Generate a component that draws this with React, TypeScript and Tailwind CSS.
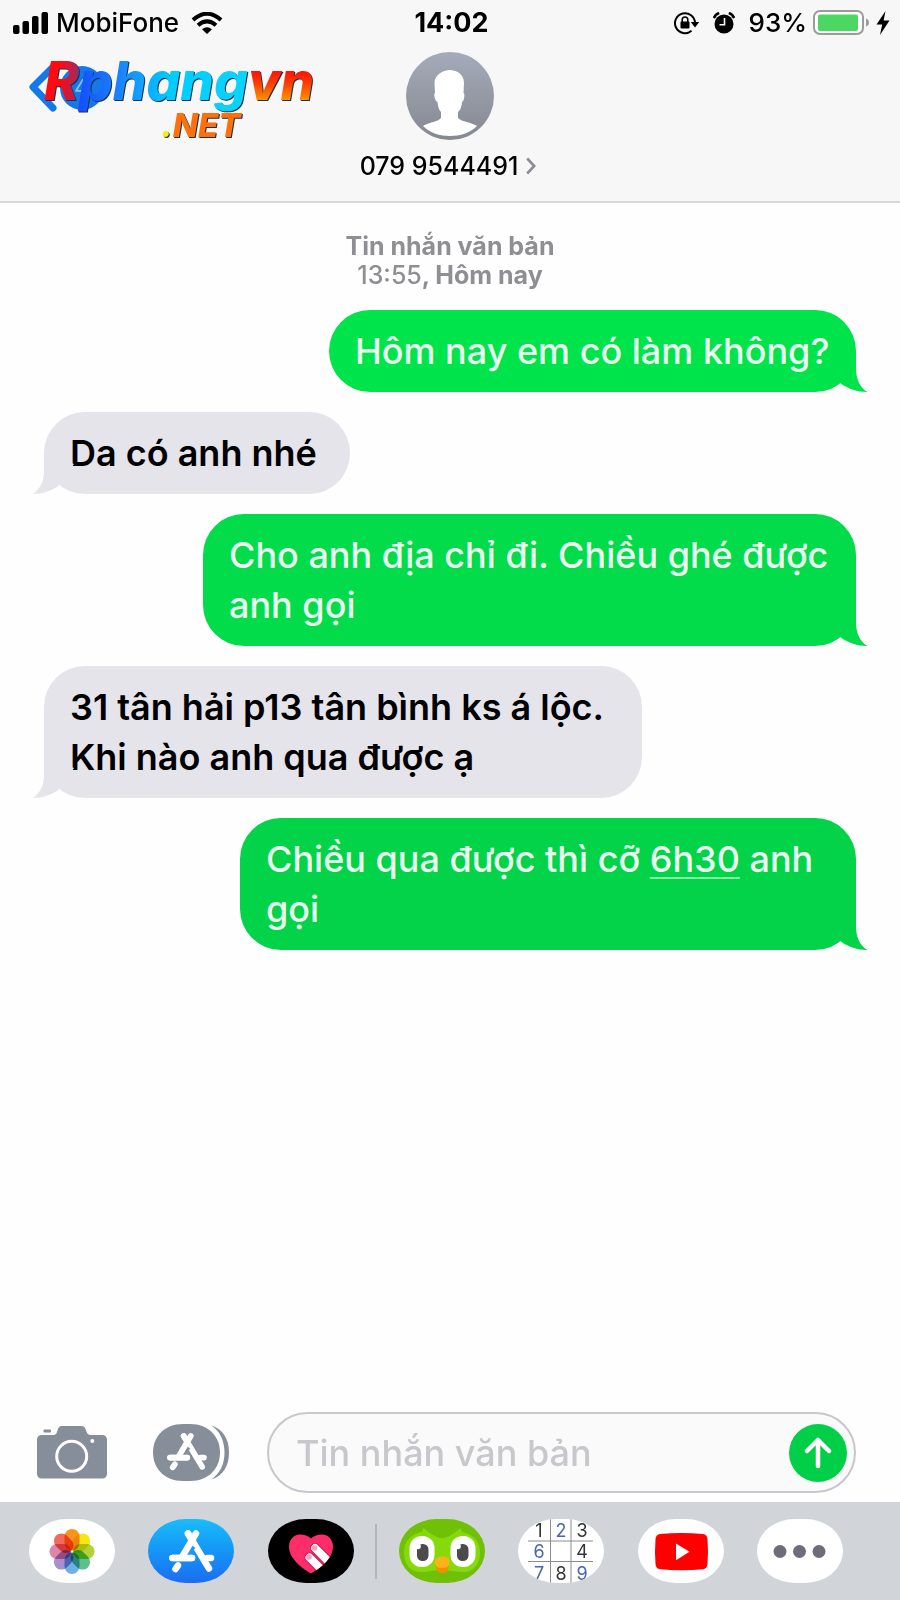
import React, { useState } from "react";

type Message = {
  mine: boolean;
  box: string;
  tail: string;
  body: React.ReactNode;
};

const messages: Message[] = [
  {
    mine: true,
    box: "w-[527px] bg-[#00e44b]",
    tail: "text-[#00e44b]",
    body: "Hôm nay em có làm không?",
  },
  {
    mine: false,
    box: "w-[306px] bg-[#e5e4ea]",
    tail: "text-[#e5e4ea]",
    body: "Da có anh nhé",
  },
  {
    mine: true,
    box: "w-[653px] bg-[#02dc4a]",
    tail: "text-[#02dc4a]",
    body: "Cho anh địa chỉ đi. Chiều ghé được anh gọi",
  },
  {
    mine: false,
    box: "w-[598px] bg-[#e5e4ea]",
    tail: "text-[#e5e4ea]",
    body: "31 tân hải p13 tân bình ks á lộc. Khi nào anh qua được ạ",
  },
  {
    mine: true,
    box: "w-[616px] bg-[#02d348]",
    tail: "text-[#02d348]",
    body: (
      <>
        Chiều qua được thì cỡ{" "}
        <a href="#time" className="underline decoration-2 underline-offset-[5px] decoration-[#8eeaa9]">
          6h30
        </a>{" "}
        anh
        <br />
        gọi
      </>
    ),
  },
];

const StatusBar = () => (
  <div className="flex h-[46px] items-center justify-between pl-[13px] pr-[10px]">
    <div className="flex flex-1 items-center">
      <svg width="36" height="22" viewBox="0 0 36 22" className="mr-[7px]">
        <rect x="0" y="13" width="6.500" height="9" rx="2" />
        <rect x="9.500" y="9" width="6.500" height="13" rx="2" />
        <rect x="19" y="4" width="6.500" height="18" rx="2" />
        <rect x="28.500" y="0" width="6.500" height="22" rx="2" />
      </svg>
      <span className="text-[26px] font-medium leading-8">MobiFone</span>
      <svg width="32" height="22" viewBox="0 0 32 22" className="ml-[12px]" fill="none" stroke="black" strokeWidth="4">
        <path d="M2 8 Q16 -4.5 30 8" />
        <path d="M7 13.2 Q16 5.5 25 13.2" />
        <path d="M11 17.2 Q16 13.2 21 17.2 L16 22 Z" fill="black" stroke="none" />
      </svg>
    </div>
    <span className="text-[27px] font-bold leading-8">14:02</span>
    <div className="flex flex-1 items-center justify-end">
      {/* rotation lock */}
      <svg width="26" height="24" viewBox="0 0 26 24" fill="none" stroke="black" strokeWidth="2">
        <path d="M17.5 19.8 A10 10 0 1 1 21 12" />
        <path d="M16.8 11 L25.2 11 L21 16.5 Z" fill="black" stroke="none" />
        <rect x="6.5" y="10.5" width="9" height="7" rx="1" fill="black" stroke="none" />
        <path d="M8.2 11 V8.8 a2.8 2.8 0 0 1 5.6 0 V11" strokeWidth="1.6" />
      </svg>
      {/* alarm */}
      <svg width="22" height="24" viewBox="0 0 22 24" className="ml-[13px]">
        <circle cx="11" cy="13" r="9.5" />
        <path d="M1.5 6 Q2.500 3.500 5 2.500 M20.500 6 Q19.500 3.500 17 2.500" fill="none" stroke="black" strokeWidth="2.8" strokeLinecap="round" />
        <path d="M11.5 7 V13.8 H6.5" fill="none" stroke="white" strokeWidth="1.6" />
      </svg>
      <span className="ml-[14px] text-[26px] font-medium leading-8">93%</span>
      <svg width="58" height="26" viewBox="0 0 58 26" className="ml-[6px]">
        <rect x="1" y="1" width="49" height="23" rx="6" fill="white" stroke="#9b9b9b" strokeWidth="2" />
        <rect x="5" y="4.5" width="40" height="16.5" rx="2" fill="#4cd763" />
        <path d="M53 8.5 Q56 9.5 56 12.5 Q56 15.5 53 16.5 Z" fill="#9b9b9b" />
      </svg>
      <svg width="14" height="24" viewBox="0 0 14 24" className="ml-[5px]">
        <path d="M9.5 0 L0.5 13.5 H6.2 L4 24 L13.5 9.5 H7.6 Z" />
      </svg>
    </div>
  </div>
);

const Watermark = () => (
  <svg width="292" height="84" viewBox="0 0 292 84" className="overflow-visible">
    <defs>
      <linearGradient id="wmBlue" gradientUnits="userSpaceOnUse" x1="17" y1="0" x2="220" y2="0">
        <stop offset="0.08" stopColor="#ff0a10" />
        <stop offset="0.16" stopColor="#a02a60" />
        <stop offset="0.17" stopColor="#1450ff" />
        <stop offset="0.38" stopColor="#1a86ff" />
        <stop offset="0.62" stopColor="#00ccff" />
        <stop offset="1" stopColor="#0cd4ff" />
      </linearGradient>
      <linearGradient id="wmRed" gradientUnits="userSpaceOnUse" x1="0" y1="14" x2="0" y2="42">
        <stop offset="0" stopColor="#ff1408" />
        <stop offset="0.4" stopColor="#fb3c04" />
        <stop offset="1" stopColor="#ff9200" />
      </linearGradient>
      <linearGradient id="wmNet" gradientUnits="userSpaceOnUse" x1="135" y1="0" x2="145" y2="0">
        <stop offset="0.6" stopColor="#f4ee10" />
        <stop offset="1" stopColor="#ff6f0a" />
      </linearGradient>
    </defs>
    <path d="M25 9 L5 29 L25 50" fill="none" stroke="#1478e8" strokeWidth="7" strokeLinecap="round" strokeLinejoin="round" />
    <circle cx="54" cy="30" r="22" fill="#1478e8" />
    <text x="46" y="37" fontSize="22" fill="#8fc0f5">4</text>
    <g className="font-extrabold italic drop-shadow-[1px_1px_0_#17334d]">
      <text x="16" y="42" fontSize="53" fill="url(#wmBlue)">
        Rphang<tspan fill="url(#wmRed)">vn</tspan>
      </text>
      <text x="133" y="79" fontSize="33" fill="url(#wmNet)">.NET</text>
    </g>
  </svg>
);

const Header = () => (
  <header className="h-[203px] border-b-2 border-[#d8d8d9] bg-[#f7f7f7]">
    <StatusBar />
    <div className="grid grid-cols-3">
      <button type="button" aria-label="Back" className="ml-[28px] mt-[12px] justify-self-start self-start">
        <Watermark />
      </button>
      <div className="mt-[6px] flex flex-col items-center">
        <svg width="88" height="88" viewBox="0 0 88 88">
          <defs>
            <linearGradient id="avatar" x1="0" y1="0" x2="0" y2="1">
              <stop offset="0" stopColor="#a5abb9" />
              <stop offset="1" stopColor="#858891" />
            </linearGradient>
          </defs>
          <circle cx="44" cy="44" r="44" fill="url(#avatar)" />
          <path
            d="M44 18 C49 18 58 21 58 31 L57.5 41 C59 41 58.5 49 56 50 C55.5 55 54.5 58 52 60 V66 C56 70 65 70 71 74 C64 81 54 84 44 84 C34 84 24 81 17 74 C23 70 32 70 35 66 V60 C33 58 32 55 31.500 50 C28.500 49 27.500 41 29 41 L28.500 31 C28.500 22 38 18 44 18 Z"
            fill="white"
          />
        </svg>
        <button type="button" className="mt-[10px] flex items-center text-[25px] font-medium leading-8">
          079 9544491
          <svg width="10" height="18" viewBox="0 0 10 18" className="ml-[8px] mr-1" fill="none" stroke="#8b8c94" strokeWidth="2.6">
            <path d="M1.200 1.500 L8.200 9 L1.200 16.500" />
          </svg>
        </button>
      </div>
    </div>
  </header>
);

const Bubble = ({ message }: { message: Message }) => (
  <div
    className={`relative max-w-full rounded-[41px] px-[26px] py-4 text-[36px] leading-[50px] ${message.box} ${
      message.mine ? "self-end font-medium text-[#eafff0]" : "self-start font-semibold text-black"
    }`}
  >
    {message.body}
    <svg
      width="41"
      height="42"
      viewBox="-30 -42 41 42"
      className={`absolute bottom-0 ${message.tail} ${message.mine ? "-right-[11px]" : "-left-[11px] -scale-x-100"}`}
    >
      <path d="M0 -42 V-24 C0 -13 4 -4 11.500 0 C2 0 -8 -3 -15 -8.500 L-30 -30 Z" fill="currentColor" />
    </svg>
  </div>
);

// the "A" made of sticks, shared by the grey and the blue App Store icons
const Sticks = ({ gap }: { gap: string }) => (
  <g fill="none" stroke="white" strokeWidth="6.500" strokeLinecap="round">
    <path d="M24.500 39 H44 M59 39 H63 M30 46.500 L27.500 50" />
    <path d="M40 14.500 L61 49.500" />
    <path d="M43.500 26 L35 38" stroke={gap} strokeWidth="9.500" strokeLinecap="butt" />
    <path d="M48 14.500 L34 38 M40 14.500 L42.500 18.500" />
    <path d="M24.500 39 H44" />
  </g>
);

const Composer = () => {
  const [text, setText] = useState("");

  const handleSubmit = (e: React.FormEvent) => {
    e.preventDefault();
    setText("");
  };

  return (
    <form onSubmit={handleSubmit} className="mb-[9px] flex items-center pl-[37px] pr-[44px]">
      <button type="button" aria-label="Camera">
        <svg width="70" height="53" viewBox="0 0 70 53" fill="#868e9a">
          <path d="M4.500 9 H16 C19 9 19.500 7.500 20.500 4.500 C21.500 1 22.500 0 25.500 0 H43.500 C47 0 48 1 49 4.500 C50 7.500 51 9 54 9 H65.500 A4.500 4.500 0 0 1 70 13.500 V48 A4.500 4.500 0 0 1 65.500 52.500 H4.500 A4.500 4.500 0 0 1 0 48 V13.500 A4.500 4.500 0 0 1 4.500 9 Z" />
          <rect x="6.500" y="3.500" width="7.500" height="3" rx="1" />
          <circle cx="34.700" cy="30.300" r="15" fill="none" stroke="white" strokeWidth="3" />
          <circle cx="55.300" cy="15" r="2" fill="white" />
        </svg>
      </button>
      <button type="button" aria-label="Apps" className="ml-[46px]">
        <svg width="76" height="57" viewBox="0 0 76 57">
          <path d="M30 0 H37 C56 0 67 13 67 28.500 C67 44 56 57 37 57 H30 C11 57 0 44 0 28.500 C0 13 11 0 30 0 Z" fill="#868e9a" />
          <path d="M58 1.300 C70 5 76 15 76 28.500 C76 42 70 52 58 55.500 C67 50 71.500 40 71.500 28.500 C71.500 17 67 7 58 1.300 Z" fill="#868e9a" />
          <g transform="translate(-4.500 -0.700) scale(0.88)">
            <Sticks gap="#868e9a" />
          </g>
        </svg>
      </button>
      <div className="ml-[38px] flex h-[81px] min-w-0 flex-1 items-center rounded-full border-2 border-[#c7c7cc] bg-[#fafafa] pl-[27px] pr-[7px]">
        <input
          type="text"
          aria-label="Tin nhắn văn bản"
          placeholder="Tin nhắn văn bản"
          value={text}
          onChange={(e) => setText(e.target.value)}
          className="h-[60px] min-w-0 flex-1 bg-transparent text-[36px] font-medium text-black outline-none placeholder:text-[#c7c7cc]"
        />
        <button type="submit" aria-label="Send" className="flex size-[58px] items-center justify-center rounded-full bg-[#02cf48]">
          <svg width="28" height="32" viewBox="0 0 28 32" fill="none" stroke="white" strokeWidth="4.500" strokeLinecap="round" strokeLinejoin="round">
            <path d="M14 29 V3 M3 14 L14 3 L25 14" />
          </svg>
        </button>
      </div>
    </form>
  );
};

const petals = [
  { angle: 0, color: "#f7941e" },
  { angle: 45, color: "#f5e614" },
  { angle: 90, color: "#b2d235" },
  { angle: 135, color: "#5cc08c" },
  { angle: 180, color: "#6cb0e4" },
  { angle: 225, color: "#a98fcb" },
  { angle: 270, color: "#dd86ac" },
  { angle: 315, color: "#f26a5e" },
];

const digits = [
  ["1", 21, 18, "#333333"],
  ["2", 43, 18, "#4a66ac"],
  ["3", 64, 18, "#333333"],
  ["6", 21, 39, "#4a66ac"],
  ["4", 64, 39, "#333333"],
  ["7", 21, 61, "#4a66ac"],
  ["8", 43, 61, "#333333"],
  ["9", 64, 61, "#4a66ac"],
] as const;

const AppButton = ({ label, bg, children }: { label: string; bg: string; children: React.ReactNode }) => (
  <button type="button" aria-label={label} className={`h-16 w-[86px] shrink-0 overflow-hidden rounded-[38px/32px] ${bg}`}>
    <svg width="86" height="64" viewBox="0 0 86 64">
      {children}
    </svg>
  </button>
);

const AppStrip = () => (
  <nav className="flex h-[98px] items-center justify-between bg-[#d1d4d9] pl-[29px] pr-[57px]">
    <AppButton label="Photos" bg="bg-white">
      {petals.map((petal) => (
        <rect
          key={petal.angle}
          x="35.500"
          y="10"
          width="15"
          height="21.500"
          rx="7.500"
          fill={petal.color}
          transform={`rotate(${petal.angle} 43 32.500)`}
          className="mix-blend-multiply"
        />
      ))}
    </AppButton>
    <AppButton label="App Store" bg="bg-linear-to-b from-[#1cbcfb] to-[#1d6cf0]">
      <Sticks gap="#1e9bf7" />
    </AppButton>
    <AppButton label="Digital Touch" bg="bg-black">
      <defs>
        <clipPath id="heart">
          <path d="M43 54.500 C37 51 21 41 21 27.500 C21 20 26.500 15.500 32 15.500 C37 15.500 41 17.500 43 19.500 C45 17.500 49 15.500 54 15.500 C59.500 15.500 65 20 65 27.500 C65 41 49 51 43 54.500 Z" />
        </clipPath>
      </defs>
      <g clipPath="url(#heart)">
        <rect width="86" height="64" fill="#fc2d68" />
        <g strokeLinecap="round">
          <path d="M47 29 L68 50 M41.500 38.500 L60 57" stroke="#d41650" strokeWidth="10" />
          <path d="M47 29 L68 50 M41.500 38.500 L60 57" stroke="white" strokeWidth="8" />
        </g>
        <circle cx="46.500" cy="29" r="2.800" fill="#f3a3bf" />
        <circle cx="41" cy="38" r="2.800" fill="#f3a3bf" />
      </g>
    </AppButton>
    <span className="-mx-[12px] h-[55px] w-[2px] bg-[#b4b6bc]" />
    <AppButton label="Duolingo" bg="bg-[#6fc006]">
      <path d="M24 9 C30 13 36 19 43 19 C50 19 56 13 62 9 C62 12 63 13 65 13.500 C75 16 81 23 81 33 C81 46 74 53 64 53 C57 53 50 51 43 51 C36 51 29 53 22 53 C12 53 5 46 5 33 C5 23 11 16 21 13.500 C23 13 24 12 24 9 Z" fill="#86da0a" />
      <rect x="10.500" y="17" width="25" height="31" rx="12" fill="white" />
      <rect x="51.500" y="17" width="25" height="31" rx="12" fill="white" />
      <rect x="18" y="25" width="11.500" height="17" rx="5.500" fill="#4b4b4b" />
      <rect x="58" y="25" width="11.500" height="17" rx="5.500" fill="#4b4b4b" />
      <circle cx="19" cy="27.500" r="2.800" fill="white" />
      <circle cx="59" cy="27.500" r="2.800" fill="white" />
      <ellipse cx="43.300" cy="48" rx="6.500" ry="6" fill="#f49000" />
      <path d="M36 43 Q36 37.500 43.300 37.500 Q50.500 37.500 50.500 43 Q50.500 49 43.300 49 Q36 49 36 43 Z" fill="#ffb31a" />
    </AppButton>
    <AppButton label="Sudoku" bg="bg-white">
      <path d="M32.500 0 V64 M53 0 V64 M10 22 H75 M10 42.500 H75" stroke="#8c8c8c" strokeWidth="1" />
      {digits.map(([digit, x, y, color]) => (
        <text key={digit} x={x} y={y} fill={color} textAnchor="middle" className="text-[18px]">
          {digit}
        </text>
      ))}
    </AppButton>
    <AppButton label="YouTube" bg="bg-white">
      <path d="M22 15 Q43.500 13 65 15 Q69 15.500 69.500 20 Q70.500 32.500 69.500 45 Q69 50 65 50.300 Q43.500 52 22 50.300 Q18 50 17.500 45 Q16.500 32.500 17.500 20 Q18 15.500 22 15 Z" fill="#fe0000" />
      <path d="M38 24.500 L51.500 32.800 L38 41.200 Z" fill="white" />
    </AppButton>
    <AppButton label="More" bg="bg-white">
      <g fill="#6d6c78">
        <circle cx="23" cy="32.500" r="6.500" />
        <circle cx="42.500" cy="32.500" r="6.500" />
        <circle cx="62" cy="32.500" r="6.500" />
      </g>
    </AppButton>
  </nav>
);

const App = () => {
  return (
    <div className="flex min-h-screen flex-col bg-[#fefefe] font-['Inter',sans-serif] text-black">
      <Header />
      <main className="flex flex-1 flex-col gap-5 px-[44px] pb-5 pt-[29px]">
        <p className="text-center text-[25px] font-bold leading-[29px] text-[#8e8e93]">
          Tin nhắn văn bản
          <br />
          <span className="font-medium">13:55</span>, Hôm nay
        </p>
        {messages.map((message, index) => (
          <Bubble key={index} message={message} />
        ))}
      </main>
      <Composer />
      <AppStrip />
    </div>
  );
};

export default App;
